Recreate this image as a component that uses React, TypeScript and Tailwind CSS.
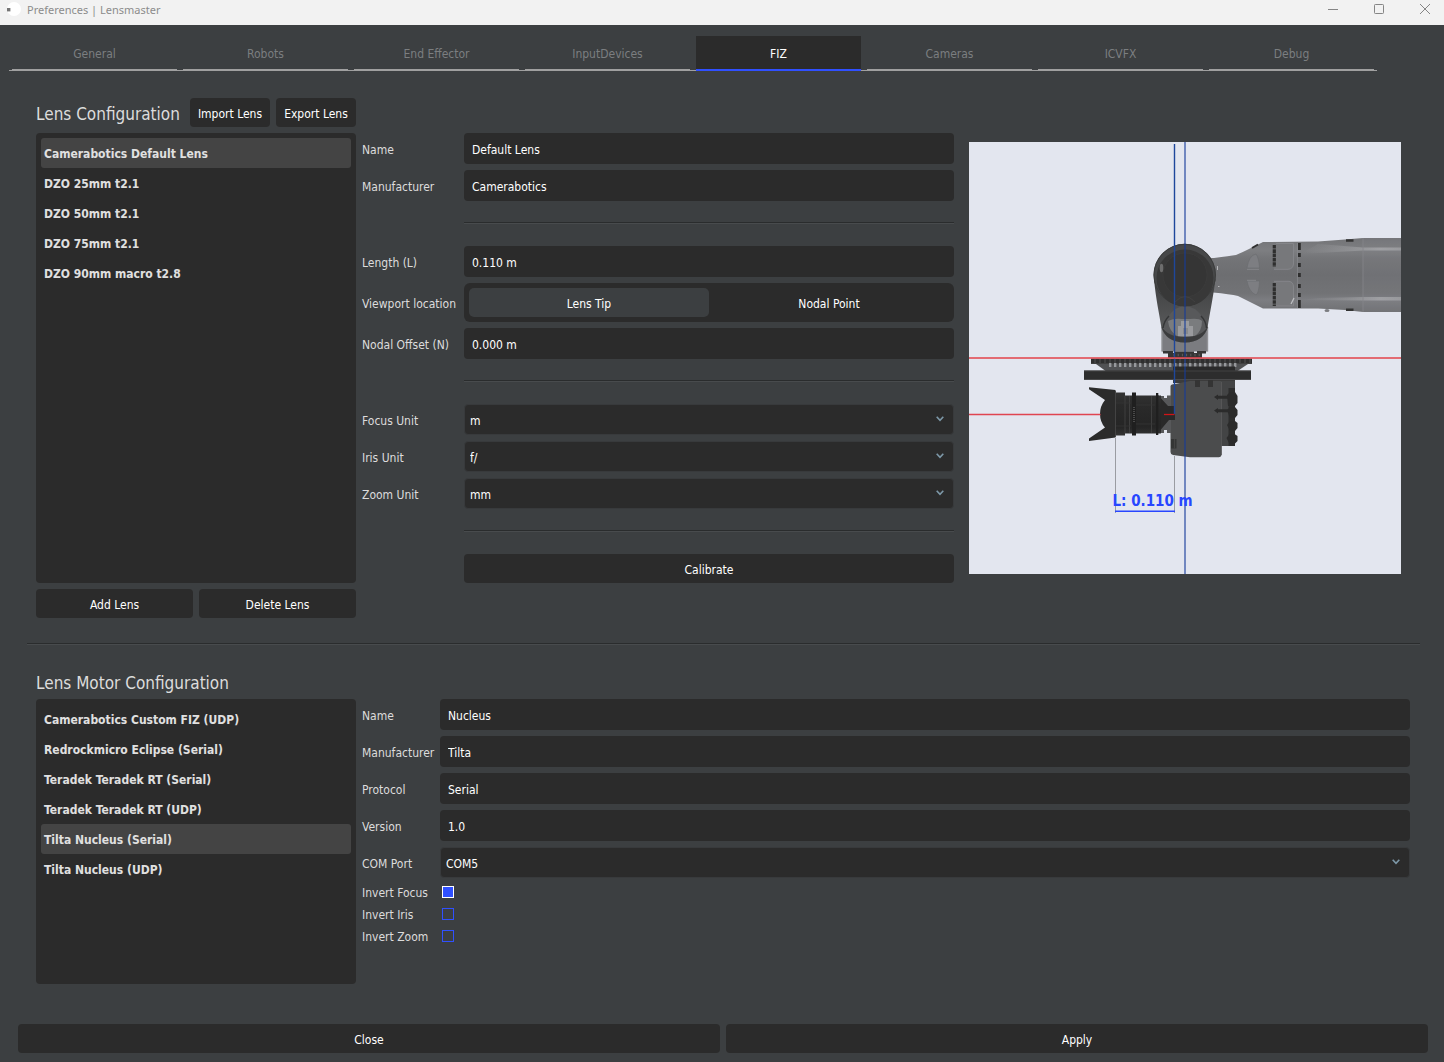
import { useId, useState } from 'react';
import type { ReactNode } from 'react';

const tabs = ['General', 'Robots', 'End Effector', 'InputDevices', 'FIZ', 'Cameras', 'ICVFX', 'Debug'];

const lenses = [
  'Camerabotics Default Lens',
  'DZO 25mm t2.1',
  'DZO 50mm t2.1',
  'DZO 75mm t2.1',
  'DZO 90mm macro t2.8',
];

const motors = [
  'Camerabotics Custom FIZ (UDP)',
  'Redrockmicro Eclipse (Serial)',
  'Teradek Teradek RT (Serial)',
  'Teradek Teradek RT (UDP)',
  'Tilta Nucleus (Serial)',
  'Tilta Nucleus (UDP)',
];

function Button({ children, className = '' }: { children: ReactNode; className?: string }) {
  return (
    <button type="button" className={`h-[29px] rounded bg-[#2b2b2b] pt-0.5 text-center whitespace-nowrap text-white ${className}`}>
      {children}
    </button>
  );
}

function ItemList({ label, items, initial, className = '' }: { label: string; items: string[]; initial: string; className?: string }) {
  const [selected, setSelected] = useState(initial);
  return (
    <ul aria-label={label} className={`w-80 shrink-0 rounded bg-[#2b2b2b] p-[5px] ${className}`}>
      {items.map((item) => (
        <li key={item}>
          <button
            type="button"
            aria-pressed={item === selected}
            onClick={() => setSelected(item)}
            className={`block h-[30px] w-full rounded-[3px] px-[3px] pt-0.5 text-left font-bold text-[#e0e0e0] ${item === selected ? 'bg-[#444444]' : ''}`}
          >
            {item}
          </button>
        </li>
      ))}
    </ul>
  );
}

function TextField({ label, value }: { label: string; value: string }) {
  const id = useId();
  return (
    <>
      <label htmlFor={id} className="pt-0.5 whitespace-nowrap">{label}</label>
      <input id={id} type="text" defaultValue={value} className="h-[31px] w-full min-w-0 rounded bg-[#2b2b2b] px-2 pt-0.5 text-white outline-none" />
    </>
  );
}

function SelectField({ label, options }: { label: string; options: string[] }) {
  const id = useId();
  return (
    <>
      <label htmlFor={id} className="pt-0.5 whitespace-nowrap">{label}</label>
      <div className="relative">
        <select id={id} className="block h-[31px] w-full appearance-none rounded border border-[#383a3c] bg-[#2b2b2b] px-[5px] pt-0.5 text-white outline-none">
          {options.map((option) => (
            <option key={option}>{option}</option>
          ))}
        </select>
        <svg viewBox="0 0 8 6" className="pointer-events-none absolute top-3 right-[10px] h-1.5 w-2" aria-hidden="true">
          <path d="M0.7 0.8 L4 4.4 L7.3 0.8" fill="none" stroke="#7d98a8" strokeWidth="1.6" />
        </svg>
      </div>
    </>
  );
}

function CheckField({ label, checked = false }: { label: string; checked?: boolean }) {
  const id = useId();
  return (
    <>
      <label htmlFor={id} className="h-4 leading-[18px] whitespace-nowrap">{label}</label>
      <input
        id={id}
        type="checkbox"
        defaultChecked={checked}
        className="ml-0.5 size-3 appearance-none border border-[#3050ff] checked:border-white checked:bg-[#3050ff]"
      />
    </>
  );
}

function Separator() {
  return (
    <div className="col-start-2 flex h-[33px] items-center pb-0.5">
      <hr className="h-0.5 w-full border-t border-b border-t-[#2a2c2d] border-b-[#484b4d]" />
    </div>
  );
}

function Segmented() {
  const [value, setValue] = useState('Lens Tip');
  return (
    <div role="group" aria-labelledby="viewport-location" className="grid grid-cols-2 rounded-md bg-[#2b2b2b] p-[5px]">
      {['Lens Tip', 'Nodal Point'].map((option) => (
        <button
          key={option}
          type="button"
          aria-pressed={option === value}
          onClick={() => setValue(option)}
          className={`h-[29px] rounded-[5px] pt-0.5 text-white ${option === value ? 'bg-[#3c3f41]' : ''}`}
        >
          {option}
        </button>
      ))}
    </div>
  );
}

const plateDots = Array.from({ length: 26 }, (_, i) => 1109 + i * 5);
const jointMarks: [number, number][] = [[243, 7], [253, 4], [263, 4], [273, 4], [284, 4], [293, 4], [300, 8]];

function LensPreview() {
  return (
    <svg viewBox="969 142 432 432" role="img" aria-label="Lens preview" className="block aspect-square w-full">
      <defs>
        <linearGradient id="arm" x1="0" y1="0" x2="0" y2="1">
          <stop offset="0" stopColor="#737477" />
          <stop offset="0.17" stopColor="#7d7e81" />
          <stop offset="0.28" stopColor="#737477" />
          <stop offset="0.5" stopColor="#6d6e71" />
          <stop offset="0.75" stopColor="#727376" />
          <stop offset="0.84" stopColor="#7c7d81" />
          <stop offset="1" stopColor="#6f7073" />
        </linearGradient>
        <linearGradient id="shine" x1="0" y1="0" x2="1" y2="0">
          <stop offset="0" stopColor="#a9aaad" stopOpacity="0" />
          <stop offset="0.8" stopColor="#c2c3c6" />
          <stop offset="1" stopColor="#b4b5b8" />
        </linearGradient>
        <linearGradient id="body" x1="0" y1="0" x2="0" y2="1">
          <stop offset="0" stopColor="#3d3e3f" />
          <stop offset="0.5" stopColor="#4f5051" />
          <stop offset="1" stopColor="#606163" />
        </linearGradient>
        <linearGradient id="barrel" x1="0" y1="0" x2="0" y2="1">
          <stop offset="0" stopColor="#333333" />
          <stop offset="0.3" stopColor="#2a2a2a" />
          <stop offset="0.8" stopColor="#252525" />
          <stop offset="1" stopColor="#343434" />
        </linearGradient>
      </defs>

      <rect x="969" y="142" width="432" height="432" fill="#e3e6ef" />

      {/* forearm */}
      <path d="M1205 258 H1214 Q1230 256 1236 255 Q1241 253 1251 248 L1263 242 L1318 241.5 L1345 239.5 L1363 238 H1401 V312 H1363 L1345 310 L1318 308.5 H1263 Q1246 300 1238 296 Q1230 294 1213 292.5 H1205Z" fill="url(#arm)" />
      <path d="M1363 238 H1401 V312 H1363Z" fill="#8b8c90" opacity="0.12" />
      <path d="M1318 244 L1363 247.5 H1401 V250.5 H1363 L1300 254Z" fill="url(#shine)" opacity="0.5" />
      <path d="M1318 298 L1363 297 H1401 V300.5 H1363 L1300 300Z" fill="url(#shine)" opacity="0.5" />
      <path d="M1363 238 V312" stroke="#85868a" strokeWidth="0.8" />
      <path d="M1252 248 L1258 244.5" stroke="#2f2f2f" strokeWidth="2" />
      <path d="M1346 240.5 h7.5 M1346 309.7 h7.5" stroke="#333333" strokeWidth="2.4" />
      <ellipse cx="1327" cy="310.5" rx="2.5" ry="1.5" fill="#7c7d81" />
      <path d="M1247 268 Q1249 255 1256 254 Q1259 258 1259.5 268Z M1247 281 H1259.5 Q1259 293 1256 295 Q1249 292 1247 281Z" fill="#7d7e82" stroke="#6a6b6e" strokeWidth="0.6" />
      <path d="M1247 269.3 H1259 M1247 280.3 H1256" stroke="#88898d" strokeWidth="0.9" />
      <path d="M1276 243.5 H1293.5 V264 Q1293 269 1288 269.3 H1274 M1274 281.3 H1289 Q1293.5 282 1293.5 287 V306 H1276" fill="#77787b" stroke="#86878b" strokeWidth="0.9" />
      <path d="M1291 304 l3 -6" stroke="#bfc0c3" strokeWidth="1.2" />
      <path d="M1274.3 245 V267 M1274.3 283 V306" stroke="#2e2e2e" strokeWidth="3.2" strokeDasharray="3.6 0.7" />
      <path d="M1297.6 243 V308" stroke="#8b8c90" strokeWidth="0.7" />
      {jointMarks.map(([y, h]) => (
        <rect key={y} x="1298" y={y} width="2.8" height={h} fill="#2e2e2e" />
      ))}

      {/* wrist */}
      <path d="M1162 322 H1207.5 V351.5 H1162Z" fill="#7b7c80" />
      <path d="M1162 327 V351.5 M1207.5 327 V351.5" stroke="#919296" strokeWidth="1.4" />
      <path d="M1154 279 C1156 300 1159 312 1161.5 328 Q1166 342 1185 342.5 Q1203 342 1207.5 328 C1210 312 1213 298 1215.5 279Z" fill="url(#body)" />
      <path d="M1163 327 Q1167 316 1175 309 L1185 305 L1195 309 Q1204 316 1206.5 327 Q1202 337 1185 337.5 Q1168 337 1163 327Z" fill="#58595b" />
      <path d="M1168 321 Q1174 318 1182 319 H1190 Q1199 318 1202 321 Q1202 331 1195 336 H1177 Q1169 331 1168 321Z" fill="#838487" opacity="0.8" />
      <path d="M1178 326 H1181 V321 H1189 V326 H1193 V336.5 H1178Z" fill="#9a9b9e" />
      <path d="M1183 328 H1188 V334 H1183Z" fill="#88898c" />
      <path d="M1161.5 326 Q1165 342 1185 342.5 Q1204 342 1208 326 Q1202 337 1185 337 Q1167 337 1161.5 326Z" fill="#3b3c3d" />
      <path d="M1163 328 Q1164 321 1169 316 M1206.5 328 Q1206 321 1201 316" fill="none" stroke="#353637" strokeWidth="1.5" />
      <circle cx="1184.7" cy="275" r="31.2" fill="#474849" />
      <circle cx="1184.7" cy="275" r="30.7" fill="none" stroke="#3b3c3c" strokeWidth="1" />
      <circle cx="1185" cy="278" r="28.5" fill="#383838" />
      <circle cx="1185" cy="275" r="22" fill="#353535" stroke="#3c3c3c" strokeWidth="0.8" />
      <path d="M1175 302 Q1185 291 1195 302" fill="none" stroke="#414141" strokeWidth="1" />
      <ellipse cx="1161.5" cy="268" rx="1.8" ry="4.2" fill="#858585" opacity="0.7" />
      <path d="M1217.5 266 V270 M1218 286.5 h1.5" stroke="#b5b6b9" strokeWidth="1" />
      <path d="M1163 351 H1173 V353 H1175 V351.5 H1194 V353 H1197 V351 H1206 V353.5 H1202 V358 H1168 V353.5 H1163Z" fill="#353535" />
      <path d="M1173.5 355 H1200" stroke="#5f5f5f" strokeWidth="2.5" strokeDasharray="1 3.2" />

      {/* mounting plate and rail */}
      <rect x="1091" y="358.5" width="161" height="5.5" fill="#404040" />
      <path d="M1091 361 H1252" stroke="#2f2f2f" strokeWidth="4" strokeDasharray="3 2" />
      <path d="M1096 364 H1248 L1236 372 H1107Z" fill="#505153" />
      {plateDots.map((x) => (
        <rect key={x} x={x} y="363" width="2.4" height="4" fill="#96989b" />
      ))}
      <rect x="1173" y="366.5" width="62" height="6" fill="#2a2a2a" />
      <rect x="1084" y="370.5" width="167" height="9.3" fill="#2d2d2d" />
      <path d="M1084 371 H1251 M1084 379.5 H1251" stroke="#474747" strokeWidth="0.8" />
      <path d="M1173 380 H1235 V383 H1173Z" fill="#3c3c3c" />

      {/* camera */}
      <path d="M1220 381 H1235 V446 H1220Z" fill="#434445" />
      <path d="M1170.5 386 Q1171 384 1175 384 L1190 381 H1221.5 V455 Q1221.5 457 1219 457.3 H1190 L1173 455 Q1170.5 454.5 1170.5 452Z" fill="#4b4c4d" />
      <path d="M1221.5 382 V455" stroke="#5a5b5c" strokeWidth="0.8" />
      <path d="M1195 380 h5 v7 h-5z M1208 380 h5 v7 h-5z" fill="#343434" />
      <path d="M1228.5 388 H1235 V446 H1228.5Z" fill="#2d2d2d" />
      <path d="M1227 395 l3 -3 h5 l2.5 4 v7 l-2.5 3 h-7z M1227 410 l3 -3 h5 l2.5 3 v5 l-2.5 3 h-5z M1227 425 l3 -4 h5 l2.5 2 v5 l-2.5 3 h-5z M1226.5 438 l3 -4 h5 l3 2 v5 l-3 3 h-5z" fill="#2b2b2b" />
      <path d="M1214 397 l4 -2.5 v1.2 h10 v3 h-10 v1.2z M1214 410.5 l4 -2.5 v1.2 h12 v3 h-12 v1.2z" fill="#2b2b2b" />
      <path d="M1171 439 h5.5 v9.5 h-5.5z" fill="#343535" />
      <path d="M1174.5 439 v9.5" stroke="#484848" strokeWidth="0.8" />

      {/* lens */}
      <path d="M1158 396 H1164 V398 H1167 V395.5 H1171 V433 H1167 V430 H1164 V433 H1158Z" fill="#57585a" />
      <path d="M1158 395 L1168 406 H1175 V420 H1169 L1158 433Z" fill="#292929" />
      <path d="M1089 387.3 L1115.5 390 V437.5 L1089 441 V438.5 L1105 427.5 Q1100 422 1100 414 Q1100 406 1105 400 L1089 389.3Z" fill="#2b2b2b" />
      <path d="M1115.5 392.5 H1125 V395.5 H1161 V433.5 H1125 V435.5 H1115.5Z" fill="url(#barrel)" />
      <path d="M1132 392.5 h4 v43 h-4z M1156 393 h2.3 v42 h-2.3z" fill="#1f1f1f" />
      <path d="M1115.5 391 V437 M1125 396 V433 M1129.5 396 V433 M1151.5 396 V433" stroke="#414141" strokeWidth="0.9" />
      <path d="M1134 407 V423" stroke="#4a4a4a" strokeWidth="2" strokeDasharray="1 1" />
      <path d="M1116 403 H1131 M1136 405 H1155 M1116 426 H1131 M1136 424 H1155" stroke="#353535" strokeWidth="0.8" />

      {/* guides */}
      <path d="M1115.5 438 V513 M1174.5 456 V513" stroke="#9a9ca2" strokeWidth="1" />
      <path d="M1174.5 144 V414" stroke="#1e479c" strokeWidth="1.4" />
      <path d="M1185 142 V574" stroke="#153b9a" strokeWidth="2" opacity="0.55" />
      <path d="M969 358 H1401" stroke="#e34d55" strokeWidth="2" opacity="0.8" />
      <path d="M969 414.5 H1100.5" stroke="#e04550" strokeWidth="1.3" />
      <path d="M1164 414.5 H1174.5" stroke="#d01418" strokeWidth="1.3" />
      <path d="M1115 511.3 H1175" stroke="#2846ff" strokeWidth="1.6" />
      <text x="1112.5" y="506" fill="#2846ff" className="text-[15px] font-bold">L: 0.110 m</text>
    </svg>
  );
}

export default function App() {
  const [tab, setTab] = useState('FIZ');
  return (
    <div className="flex min-h-screen flex-col bg-[#3c3f41] font-['DejaVu_Sans_Condensed','DejaVu_Sans',sans-serif] text-xs text-[#dcdcdc]">
      <header className="flex h-[25px] items-start justify-between bg-[#f2f2f2] text-[#8c8c8c]">
        <div className="flex h-5 items-center gap-1.5 pl-[6px]">
          <svg viewBox="0 0 15 18" className="h-[18px] w-[15px]" aria-hidden="true">
            <circle cx="8" cy="8" r="7" fill="#ffffff" />
            <rect x="1" y="7" width="3.4" height="3.4" fill="#757575" />
          </svg>
          <h1 className="font-['Noto_Sans',sans-serif] text-[11px]">Preferences | Lensmaster</h1>
        </div>
        <div className="flex gap-2">
          <button type="button" aria-label="Minimize" className="flex h-[18px] w-[38px] items-center justify-center">
            <svg viewBox="0 0 10 10" className="size-2.5"><path d="M0 5.5 H10" stroke="#858585" /></svg>
          </button>
          <button type="button" aria-label="Maximize" className="flex h-[18px] w-[38px] items-center justify-center">
            <svg viewBox="0 0 10 10" className="size-2.5"><rect x="0.5" y="0.5" width="9" height="9" rx="0.8" fill="none" stroke="#858585" /></svg>
          </button>
          <button type="button" aria-label="Close" className="flex h-[18px] w-[38px] items-center justify-center">
            <svg viewBox="0 0 10 10" className="size-2.5"><path d="M0 0 L10 10 M10 0 L0 10" stroke="#858585" /></svg>
          </button>
        </div>
      </header>

      <nav role="tablist" className="mt-[11px] ml-[9px] flex w-[1368px] max-w-full bg-[linear-gradient(#a0a0a0,#a0a0a0)] bg-[length:100%_1px] bg-bottom bg-no-repeat">
        {tabs.map((name) => (
          <button
            key={name}
            type="button"
            role="tab"
            aria-selected={name === tab}
            onClick={() => setTab(name)}
            className={`mx-[3px] h-[35px] min-w-0 flex-1 border-b-2 pt-[3px] ${name === tab ? 'border-[#3050ff] bg-[#2b2b2b] text-white' : 'border-[#a0a0a0] text-[#7b7e80]'}`}
          >
            {name}
          </button>
        ))}
      </nav>

      <main className="flex flex-1 flex-col pt-[27px] pr-[34px] pl-9">
        <section className="flex flex-col gap-1.5">
          <div className="flex w-80 items-center gap-1.5">
            <h2 className="flex-1 pt-0.5 text-[17px] leading-6 whitespace-nowrap">Lens Configuration</h2>
            <Button className="w-20">Import Lens</Button>
            <Button className="w-20">Export Lens</Button>
          </div>
          <div className="flex gap-1.5">
            <ItemList label="Lenses" items={lenses} initial="Camerabotics Default Lens" />
            <form className="grid min-w-0 flex-1 grid-cols-[96px_minmax(0,1fr)] content-start items-center gap-1.5">
              <TextField label="Name" value="Default Lens" />
              <TextField label="Manufacturer" value="Camerabotics" />
              <Separator />
              <TextField label="Length (L)" value="0.110 m" />
              <span id="viewport-location" className="pt-0.5 whitespace-nowrap">Viewport location</span>
              <Segmented />
              <TextField label="Nodal Offset (N)" value="0.000 m" />
              <Separator />
              <SelectField label="Focus Unit" options={['m', 'ft']} />
              <SelectField label="Iris Unit" options={['f/', 'T']} />
              <SelectField label="Zoom Unit" options={['mm', 'in']} />
              <Separator />
              <Button className="col-start-2">Calibrate</Button>
            </form>
            <div className="w-[450px] shrink-0 p-[9px]">
              <LensPreview />
            </div>
          </div>
          <div className="grid w-80 grid-cols-2 gap-1.5">
            <Button>Add Lens</Button>
            <Button>Delete Lens</Button>
          </div>
        </section>

        <hr className="mt-[25px] -mr-[10px] -ml-[9px] h-0.5 border-t border-b border-t-[#2a2c2d] border-b-[#484b4d]" />

        <section className="mt-[26px] flex flex-1 flex-col gap-1">
          <h2 className="text-[17px] leading-6">Lens Motor Configuration</h2>
          <div className="flex flex-1 gap-1.5">
            <ItemList label="Lens motors" items={motors} initial="Tilta Nucleus (Serial)" />
            <form className="grid min-w-0 flex-1 grid-cols-[72px_minmax(0,1fr)] content-start items-center gap-1.5">
              <TextField label="Name" value="Nucleus" />
              <TextField label="Manufacturer" value="Tilta" />
              <TextField label="Protocol" value="Serial" />
              <TextField label="Version" value="1.0" />
              <SelectField label="COM Port" options={['COM5', 'COM6']} />
              <CheckField label="Invert Focus" checked />
              <CheckField label="Invert Iris" />
              <CheckField label="Invert Zoom" />
            </form>
          </div>
        </section>
      </main>

      <footer className="mt-10 mb-[9px] grid grid-cols-2 gap-1.5 pr-4 pl-[18px]">
        <Button>Close</Button>
        <Button>Apply</Button>
      </footer>
    </div>
  );
}
